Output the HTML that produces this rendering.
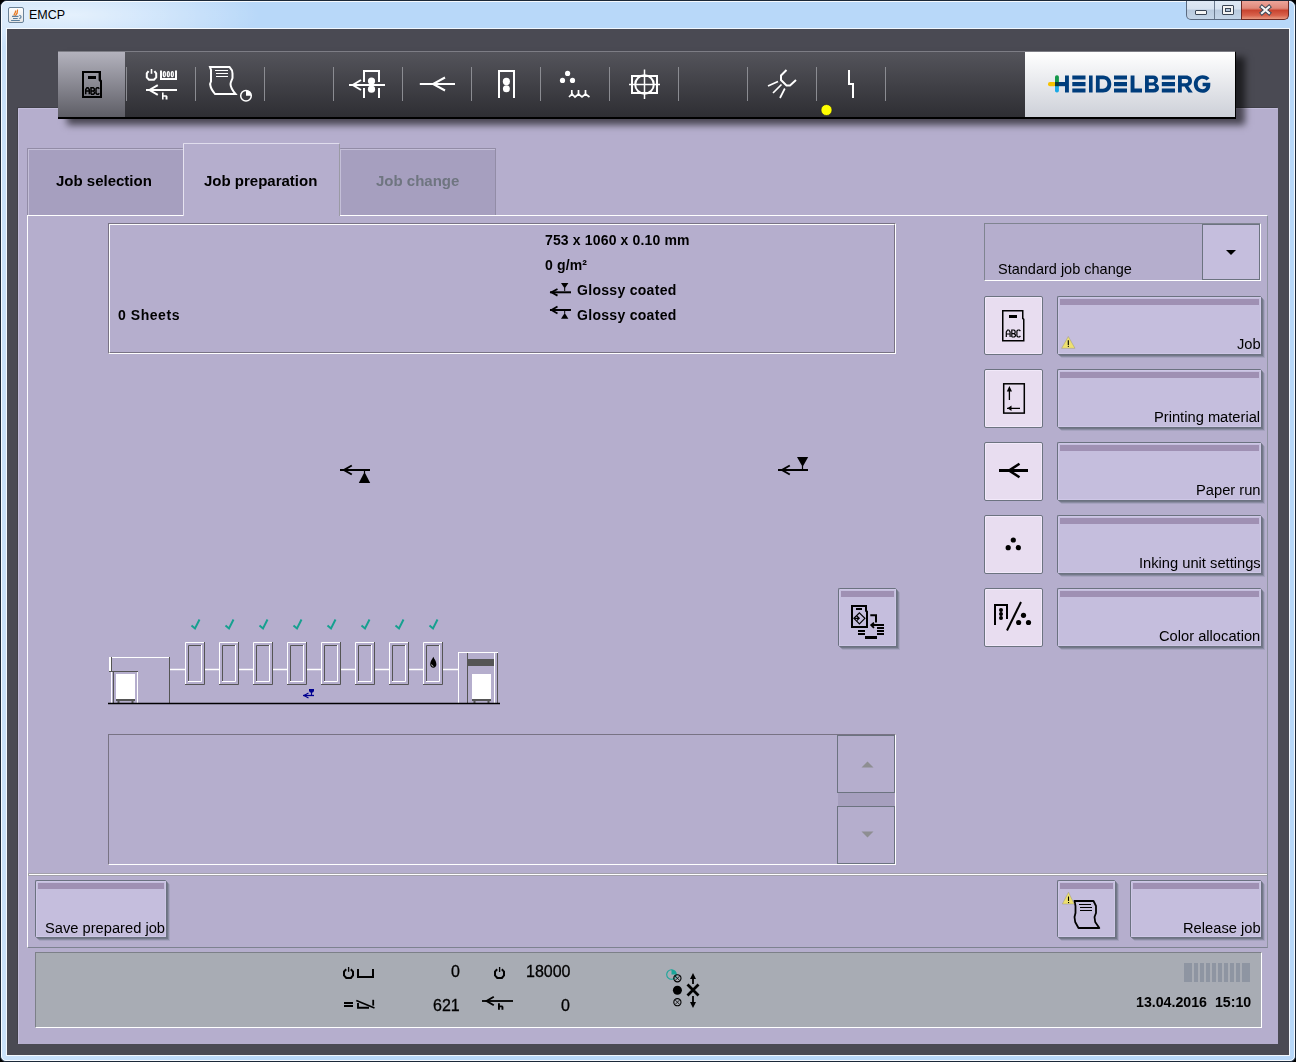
<!DOCTYPE html>
<html><head><meta charset="utf-8">
<style>
*{margin:0;padding:0;box-sizing:border-box}
html,body{width:1296px;height:1062px;overflow:hidden;background:#000;font-family:"Liberation Sans",sans-serif}
.a{position:absolute}
.info,.txt,.num,.lbl,.btxt{will-change:transform}
#frame{left:0;top:0;width:1296px;height:1062px;border-radius:7px 7px 6px 6px;background:radial-gradient(ellipse 190px 34px at 70px 14px,rgba(255,255,255,.55),rgba(255,255,255,0)),linear-gradient(90deg,rgba(255,255,255,.25),rgba(255,255,255,0) 260px),#b8d8f9;border:1px solid #1b2838}
#client{left:7px;top:29px;width:1282px;height:1026px;background:#4a4a53}
#lav{left:18px;top:108px;width:1260px;height:936px;background:#b5aecd;border-radius:1px 1px 0 0;box-shadow:inset 1px 1px 0 #c3bddb,-1px -1px 0 #404048}
#tb{left:58px;top:51px;width:1178px;height:68px;background:linear-gradient(#54545b,#2e2e33);border-top:1px solid #7d7d85;border-bottom:2px solid #000;border-right:1px solid #000;box-shadow:9px 6px 7px rgba(0,0,0,.6)}
.sep{width:1px;height:34px;top:16px;background:#8a8a90}
#logo{left:1025px;top:52px;width:210px;height:65px;background:linear-gradient(#ffffff,#cdd0d8)}
.tabi{background:#a69fbf;border-top:1px solid #928ca6;border-left:1px solid #928ca6;border-right:1px solid #928ca6;border-radius:1px 1px 0 0;box-shadow:inset 1px 1px 0 #c4bfd8}
.info{font-weight:bold;font-size:14px;color:#000;white-space:nowrap}
.txt{font-size:14.5px;color:#000;white-space:nowrap}
.num{font-size:16px;color:#000;white-space:nowrap;-webkit-text-stroke:.3px #000}
.lbl{font-weight:bold;font-size:15px;color:#000;white-space:nowrap}
.etch{border-top:1px solid #7a7488;border-left:1px solid #7a7488;box-shadow:inset 1px 1px 0 #fff, 1px 1px 0 #fff;}
.ib{width:59px;height:59px;background:#e8ddf0;border:1px solid #6c7380;border-radius:2px;box-shadow:inset 1px 1px 0 #f2e9fa,inset -1px -1px 0 #f2e9fa}
.bt{background:#c5bedd;border-left:1px solid #6b7280;border-top:1px solid #6b7280;border-radius:2px 1px 0 1px;box-shadow:inset 1px 1px 0 #cec7e6,inset -1px -1px 0 #cec7e6,1px 1px 0 #6b7280,2px 2px 0 rgba(107,114,128,.75),3px 3px 0 rgba(107,114,128,.45),4px 4px 0 rgba(107,114,128,.2)}
.stripe{left:2px;right:2px;top:2px;height:6px;background:#9f90b3}
.btxt{font-size:14.7px;color:#000;white-space:nowrap;right:.5px;bottom:2px}
</style></head><body>
<div id="frame" class="a"></div>
<div id="client" class="a"></div>
<div class="a" style="left:1px;top:1px;width:1294px;height:1060px;border:1px solid rgba(255,255,255,.85);border-radius:6px 6px 5px 5px"></div>
<div class="a" style="left:6px;top:28px;width:1284px;height:1028px;border:1px solid rgba(255,255,255,.8)"></div>
<!-- title icon -->
<div class="a" style="left:8px;top:7px;width:16px;height:16px;border:1px solid #6a8298;border-radius:2px;background:linear-gradient(#fdfdfd,#e6e6e6)"></div>
<svg class="a" style="left:0;top:0" width="30" height="30">
<path d="M14.3 15.6C13.2 13.5 16.8 12.6 15.3 10.6M17.8 9.6C16.4 11 18.5 12.3 16.2 14.4C15.2 15.3 16 15.8 16.2 15.8" stroke="#e87820" stroke-width="1.3" fill="none"/>
<path d="M12 16.4H18.5M13 18.5H17.7M11.1 20.5H19.8" stroke="#5b7f9e" stroke-width="1.1"/>
<path d="M19.3 15.2C21.6 15.6 21.8 17.9 19.3 18.8" stroke="#5b7f9e" stroke-width="1.1" fill="none"/>
</svg>
<div class="a" style="left:29px;top:8px;font-size:12.5px;color:#000">EMCP</div>
<!-- window buttons -->
<div class="a" style="left:1186px;top:1px;width:56px;height:19px;border:1px solid #5b6a80;border-top:none;border-radius:0 0 0 5px;background:linear-gradient(#dfe9f5 0,#d6e2f0 45%,#b9cade 50%,#c4d5e8 100%)"></div>
<div class="a" style="left:1214px;top:1px;width:1px;height:18px;background:#6a7a8e"></div>
<div class="a" style="left:1195px;top:10px;width:12px;height:5px;background:#f4f4f4;border:1px solid #3a4555;border-radius:1px"></div>
<div class="a" style="left:1222px;top:5px;width:12px;height:10px;background:#f4f4f4;border:1px solid #3a4555;border-radius:1px"></div>
<div class="a" style="left:1225px;top:8px;width:6px;height:4px;background:#b4c6da;border:1px solid #3a4555"></div>
<div class="a" style="left:1241px;top:1px;width:48px;height:19px;border:1px solid #6b2a24;border-top:none;border-radius:0 0 5px 0;background:linear-gradient(#eda59a 0,#e0887a 40%,#c84430 52%,#d8624c 80%,#e89a82 100%)"></div>
<svg class="a" style="left:1258px;top:4px" width="16" height="12" viewBox="0 0 16 12"><path d="M4 3l7 6M11 3L4 9" stroke="#404a58" stroke-width="4.2" stroke-linecap="square"/><path d="M4 3l7 6M11 3L4 9" stroke="#f6f6f6" stroke-width="2.2" stroke-linecap="square"/></svg>

<div id="lav" class="a"></div>
<div id="tb" class="a">
  <div class="a" style="left:0;top:0;width:67px;height:65px;background:linear-gradient(#b3b2bd,#5e5e66)"></div>
</div>
<div id="logo" class="a"></div><div class="a" style="left:126px;top:67px;width:1px;height:34px;background:#8b8c92"></div><div class="a" style="left:195px;top:67px;width:1px;height:34px;background:#8b8c92"></div><div class="a" style="left:264px;top:67px;width:1px;height:34px;background:#8b8c92"></div><div class="a" style="left:333px;top:67px;width:1px;height:34px;background:#8b8c92"></div><div class="a" style="left:402px;top:67px;width:1px;height:34px;background:#8b8c92"></div><div class="a" style="left:471px;top:67px;width:1px;height:34px;background:#8b8c92"></div><div class="a" style="left:540px;top:67px;width:1px;height:34px;background:#8b8c92"></div><div class="a" style="left:609px;top:67px;width:1px;height:34px;background:#8b8c92"></div><div class="a" style="left:678px;top:67px;width:1px;height:34px;background:#8b8c92"></div><div class="a" style="left:747px;top:67px;width:1px;height:34px;background:#8b8c92"></div><div class="a" style="left:816px;top:67px;width:1px;height:34px;background:#8b8c92"></div><div class="a" style="left:885px;top:67px;width:1px;height:34px;background:#8b8c92"></div>
<svg class="a" style="left:0;top:0" width="1296" height="130">
<g fill="#000" fill-rule="evenodd">
<path d="M82 71H101V79.5L102 80.5V98H82Z M84 73V96H100V82L98.6 80.6V73Z"/>
<rect x="88" y="76" width="8" height="3"/>
</g>
<g stroke="#000" stroke-width="1.5" fill="none">
<path d="M85.7 94.3V89.5L87 87.7H88L89.3 89.5V94.3M85.7 91H89.3"/>
<path d="M91 94.3V87.7H93.3L94.3 88.7V90.3L93.3 91H91M93.3 91L94.5 92V93.3L93.5 94.3H91"/>
<path d="M99.3 88.7L98.3 87.7H97L96 88.7V93.3L97 94.3H98.3L99.3 93.3"/>
</g>
<g stroke="#fff" stroke-width="2" fill="none">
<path d="M148.6 71.2L146.8 73.4V77.4L149 79.8H154L156.2 77.4V73.4L154.4 71.2"/>
<path d="M151.5 69V73.8" stroke-width="1.6"/>
<path d="M161 70.5V79H176V70.5"/>
<path d="M146 90H177"/>
<path d="M157.8 85.2L149.5 90L157.8 94.8"/>
</g>
<g stroke="#fff" stroke-width="1.3" fill="none">
<ellipse cx="164.3" cy="74.2" rx="1" ry="2.5"/><ellipse cx="168.3" cy="74.2" rx="1" ry="2.5"/><ellipse cx="172.3" cy="74.2" rx="1" ry="2.5"/>
</g>
<path d="M162 92.5H163.6V95.3H166.5L167.5 96.3V99.5H165.6V96.8H163.6V99.5H162Z" fill="#fff"/>
<g stroke="#fff" stroke-width="2" fill="none">
<path d="M210 67H229.5C231 68.5 232.5 71 232.5 73.5V78C232 80 230.5 82 230.5 84C230.5 88 233 91 235.5 94H215C213 91.5 211 89 210.5 86C210 84.5 210 83 211 81.5V70Z"/>
</g>
<g stroke="#fff" stroke-width="1" fill="none"><path d="M215 70.5H228M216 73.5H228M216 76.5H228"/></g>
<circle cx="246" cy="95.8" r="5.3" stroke="#fff" stroke-width="1.5" fill="none"/>
<path d="M246 95.8V90.5A5.3 5.3 0 0 1 251.3 95.8Z" fill="#fff"/>
<g stroke="#fff" stroke-width="2" fill="none">
<path d="M349 85H385"/>
<path d="M361 80L352.8 85L361 90"/>
<path d="M364 82V71H379V82M364 88V98M379 88V98"/>
<path d="M419.8 84H455"/>
<path d="M445 77.5L433 84L445 90.5"/>
<path d="M499 98V71H514V98"/>
<rect x="632" y="76" width="25" height="17"/>
<circle cx="644.5" cy="84.5" r="9.3"/>
<path d="M786.5 70L781 75.5V80L786.5 85.5H790L796 80"/>
<path d="M849 70V84H853V98"/>
<path d="M569 97L572 94L575 97L578.5 94L582 97L585.5 94L589.5 97" stroke-width="1.7"/>
</g>
<g stroke="#fff" stroke-width="1.7" fill="none">
<path d="M571.8 90V94M578.5 90V94M585.5 90V94"/>
<path d="M778 81.5L768 86M781.5 84.5L773 93M784.8 88.5L780 98"/>
</g>
<g stroke="#fff" stroke-width="1.5" fill="none">
<path d="M644.5 69.5V99M629 84.5H660"/>
</g>
<g fill="#fff">
<circle cx="371.5" cy="81" r="3.6"/><circle cx="371.5" cy="89.2" r="3.6"/>
<circle cx="506.4" cy="81.4" r="3.6"/><circle cx="506.4" cy="88.8" r="3.5"/>
<circle cx="567.6" cy="73.4" r="2.6"/><circle cx="562.5" cy="80.4" r="2.6"/><circle cx="572.5" cy="80.4" r="2.6"/>
</g>
<circle cx="826.5" cy="110" r="5.5" fill="#ffff00" stroke="#1c1c2c" stroke-width=".6"/>
<!-- logo -->
<g fill="#003d7c">
<rect x="1055" y="82" width="12" height="4.2"/>
<rect x="1065" y="75.5" width="3.9" height="17"/>
<rect x="1072.3" y="75.5" width="13.2" height="4"/><rect x="1072.3" y="82" width="13.2" height="4.2"/><rect x="1072.3" y="88.5" width="13.2" height="4"/>
<rect x="1089" y="75.5" width="3.6" height="17"/>
<path d="M1095.9 75.5H1103C1108 75.5 1111.3 79 1111.3 84C1111.3 89 1108 92.5 1103 92.5H1095.9Z M1099.7 79.3V88.7H1103C1105.8 88.7 1107.4 86.7 1107.4 84C1107.4 81.3 1105.8 79.3 1103 79.3Z" fill-rule="evenodd"/>
<rect x="1114" y="75.5" width="13" height="4"/><rect x="1114" y="82" width="13" height="4.2"/><rect x="1114" y="88.5" width="13" height="4"/>
<path d="M1130.6 75.5H1134.5V88.5H1142V92.5H1130.6Z"/>
<path d="M1145 75.5H1153C1156.3 75.5 1158 77.3 1158 79.8C1158 81.8 1157 83 1155.6 83.6C1157.6 84.3 1159 85.8 1159 88C1159 90.8 1157 92.5 1153.5 92.5H1145Z M1148.8 79V82.4H1152.5C1153.8 82.4 1154.3 81.7 1154.3 80.7C1154.3 79.7 1153.8 79 1152.5 79Z M1148.8 85.6V89H1153C1154.5 89 1155.2 88.3 1155.2 87.3C1155.2 86.3 1154.5 85.6 1153 85.6Z" fill-rule="evenodd"/>
<rect x="1161.8" y="75.5" width="13.2" height="4"/><rect x="1161.8" y="82" width="13.2" height="4.2"/><rect x="1161.8" y="88.5" width="13.2" height="4"/>
<path d="M1178 75.5H1186C1189.8 75.5 1192 77.8 1192 81C1192 83.6 1190.6 85.4 1188.3 86.1L1192.8 92.5H1188.4L1184.5 86.6H1181.8V92.5H1178Z M1181.8 79V83.2H1185.8C1187.4 83.2 1188.2 82.3 1188.2 81.1C1188.2 79.9 1187.4 79 1185.8 79Z" fill-rule="evenodd"/>
<path d="M1209.5 78.2C1208 76.3 1205.5 75.2 1202.5 75.2C1197.3 75.2 1193.8 79.2 1193.8 84C1193.8 88.9 1197.4 92.8 1202.5 92.8C1207.3 92.8 1210.3 89.6 1210.3 85V82.8H1202.6V86.2H1206.3C1205.8 88.2 1204.4 89.2 1202.5 89.2C1199.6 89.2 1197.7 86.9 1197.7 84C1197.7 81.1 1199.6 78.8 1202.5 78.8C1204.2 78.8 1205.6 79.5 1206.5 80.6Z"/>
</g>
<rect x="1048" y="82" width="8" height="4.2" rx="2" fill="#f7c200"/>
<rect x="1055" y="75.3" width="3.9" height="9" rx="1.8" fill="#15984a"/>
<rect x="1055" y="84" width="3.9" height="8.6" rx="1.8" fill="#1aa9e6"/>
<rect x="1055" y="82" width="3.9" height="4.2" fill="#0a3a3a"/>
</svg>


<!-- tabs -->
<div class="a" style="left:27px;top:215px;width:1241px;height:733px;border-top:1px solid #fff;border-left:1px solid #fff;border-right:1px solid #8d93a0;border-bottom:1px solid #7d8290"></div>
<div class="a tabi" style="left:27px;top:148px;width:156px;height:67px;border-right:none"></div>
<div class="a" style="left:183px;top:143px;width:157px;height:73px;background:#b5aecd;border-top:1px solid #e0dded;border-left:1px solid #e6e3f0;border-right:1px solid #9a9aa4;border-radius:1px 1px 0 0"></div>
<div class="a tabi" style="left:340px;top:148px;width:156px;height:67px;border-left:none;box-shadow:inset 1px 1px 0 #c4bfd8"></div>
<div class="a lbl" style="left:56px;top:172px">Job selection</div>
<div class="a lbl" style="left:204px;top:172px">Job preparation</div>
<div class="a lbl" style="left:376px;top:172px;color:#6f7580">Job change</div>

<!-- info panel -->
<div class="a" style="left:108px;top:223px;width:788px;height:131px;border-top:1px solid #787384;border-left:1px solid #787384;border-right:1px solid #fff;border-bottom:1px solid #fff"></div>
<div class="a" style="left:109px;top:224px;width:786px;height:129px;border-top:1px solid #fff;border-left:1px solid #fff;border-right:1px solid #787384;border-bottom:1px solid #787384"></div>
<div class="a info" style="left:545px;top:232px;letter-spacing:.15px">753 x 1060 x 0.10 mm</div>
<div class="a info" style="left:545px;top:256.5px;letter-spacing:.15px">0 g/m²</div>
<div class="a info" style="left:576.5px;top:282px;letter-spacing:.3px">Glossy coated</div>
<div class="a info" style="left:576.5px;top:307px;letter-spacing:.3px">Glossy coated</div>
<div class="a info" style="left:117.5px;top:307px;letter-spacing:.55px">0 Sheets</div>
<!-- combo -->
<div class="a" style="left:984px;top:223px;width:277px;height:58px;border-top:1px solid #7f8490;border-left:1px solid #7f8490;border-right:1px solid #fff;border-bottom:1px solid #fff"></div>
<div class="a" style="left:1202px;top:224px;width:58px;height:56px;background:#c5bedd;border:1px solid #6c7380"></div>
<svg class="a" style="left:1225px;top:249px" width="12" height="7"><path d="M1 1h10L6 6z" fill="#000"/></svg>
<div class="a txt" style="left:998px;top:261px">Standard job change</div>
<!-- right buttons -->
<div class="a ib" style="left:984px;top:296px"></div>
<div class="a ib" style="left:984px;top:369px"></div>
<div class="a ib" style="left:984px;top:442px"></div>
<div class="a ib" style="left:984px;top:515px"></div>
<div class="a ib" style="left:984px;top:588px"></div>
<div class="a bt" style="left:1057px;top:296px;width:204px;height:58px"><div class="a stripe"></div><div class="a btxt">Job</div></div>
<div class="a bt" style="left:1057px;top:369px;width:204px;height:58px"><div class="a stripe"></div><div class="a btxt">Printing material</div></div>
<div class="a bt" style="left:1057px;top:442px;width:204px;height:58px"><div class="a stripe"></div><div class="a btxt">Paper run</div></div>
<div class="a bt" style="left:1057px;top:515px;width:204px;height:58px"><div class="a stripe"></div><div class="a btxt">Inking unit settings</div></div>
<div class="a bt" style="left:1057px;top:588px;width:204px;height:58px"><div class="a stripe"></div><div class="a btxt">Color allocation</div></div>
<div class="a bt" style="left:838px;top:588px;width:58px;height:58px"><div class="a stripe"></div></div>

<svg class="a" style="left:0;top:0" width="1296" height="720">
<g fill="none" stroke-width="1">
<path d="M170 669.5H185M205 669.5H219M239 669.5H253M273 669.5H287M307 669.5H321M341 669.5H355M375 669.5H389M409 669.5H423M443 669.5H458" stroke="#fff" stroke-width="1.3"/>
<path d="M185.5 684.5V642.5H204.5" stroke="#fff"/><path d="M204.5 642V684.5H185" stroke="#555"/><path d="M188.5 681V645.5H201.5" stroke="#555"/><path d="M201.5 645V681.5H188" stroke="#fff"/><path d="M191.5 625.5L195 628.5L199.5 619.5" stroke="#17a090" stroke-width="2"/><path d="M219.5 684.5V642.5H238.5" stroke="#fff"/><path d="M238.5 642V684.5H219" stroke="#555"/><path d="M222.5 681V645.5H235.5" stroke="#555"/><path d="M235.5 645V681.5H222" stroke="#fff"/><path d="M225.5 625.5L229 628.5L233.5 619.5" stroke="#17a090" stroke-width="2"/><path d="M253.5 684.5V642.5H272.5" stroke="#fff"/><path d="M272.5 642V684.5H253" stroke="#555"/><path d="M256.5 681V645.5H269.5" stroke="#555"/><path d="M269.5 645V681.5H256" stroke="#fff"/><path d="M259.5 625.5L263 628.5L267.5 619.5" stroke="#17a090" stroke-width="2"/><path d="M287.5 684.5V642.5H306.5" stroke="#fff"/><path d="M306.5 642V684.5H287" stroke="#555"/><path d="M290.5 681V645.5H303.5" stroke="#555"/><path d="M303.5 645V681.5H290" stroke="#fff"/><path d="M293.5 625.5L297 628.5L301.5 619.5" stroke="#17a090" stroke-width="2"/><path d="M321.5 684.5V642.5H340.5" stroke="#fff"/><path d="M340.5 642V684.5H321" stroke="#555"/><path d="M324.5 681V645.5H337.5" stroke="#555"/><path d="M337.5 645V681.5H324" stroke="#fff"/><path d="M327.5 625.5L331 628.5L335.5 619.5" stroke="#17a090" stroke-width="2"/><path d="M355.5 684.5V642.5H374.5" stroke="#fff"/><path d="M374.5 642V684.5H355" stroke="#555"/><path d="M358.5 681V645.5H371.5" stroke="#555"/><path d="M371.5 645V681.5H358" stroke="#fff"/><path d="M361.5 625.5L365 628.5L369.5 619.5" stroke="#17a090" stroke-width="2"/><path d="M389.5 684.5V642.5H408.5" stroke="#fff"/><path d="M408.5 642V684.5H389" stroke="#555"/><path d="M392.5 681V645.5H405.5" stroke="#555"/><path d="M405.5 645V681.5H392" stroke="#fff"/><path d="M395.5 625.5L399 628.5L403.5 619.5" stroke="#17a090" stroke-width="2"/><path d="M423.5 684.5V642.5H442.5" stroke="#fff"/><path d="M442.5 642V684.5H423" stroke="#555"/><path d="M426.5 681V645.5H439.5" stroke="#555"/><path d="M439.5 645V681.5H426" stroke="#fff"/><path d="M429.5 625.5L433 628.5L437.5 619.5" stroke="#17a090" stroke-width="2"/>
<!-- feeder -->
<path d="M109 657.5H169" stroke="#fff"/>
<rect x="109" y="657" width="2" height="14" fill="#fff" stroke="none"/>
<path d="M111.5 657V671.5M109 671.5H138" stroke="#555"/>
<path d="M111.5 672V703M137.5 672V703" stroke="#fff"/>
<path d="M113.5 672V703M169.5 657V703" stroke="#555"/>
<rect x="116" y="674" width="19" height="25" fill="#fff" stroke="none"/>
<path d="M116 700H135" stroke="#555" stroke-width="2"/>
<path d="M118.5 701V703M132.5 701V703" stroke="#555" stroke-width="2"/>
<!-- delivery -->
<path d="M458 652.5H498M458.5 652V703M494.5 653V703" stroke="#fff"/>
<path d="M467.5 653V703M497.5 653V703" stroke="#555"/>
<rect x="468" y="659" width="26" height="7" fill="#555" stroke="none"/>
<rect x="472" y="674" width="19" height="25" fill="#fff" stroke="none"/>
<path d="M472 700H491" stroke="#555" stroke-width="2"/>
<path d="M474.5 701V703M488.5 701V703" stroke="#555" stroke-width="2"/>
<path d="M108 703.5H500" stroke="#000" stroke-width="1.6"/>
</g>
<!-- ink drop -->
<path d="M433.3 656.8C432.5 659 430.2 661 430.2 664.3C430.2 666.3 431.6 667.7 433.3 667.7C435 667.7 436.4 666.3 436.4 664.3C436.4 661 434.1 659 433.3 656.8Z" fill="#000"/>
<path d="M431.6 664.5C431.8 665.6 432.4 666.2 433.4 666.4" stroke="#fff" stroke-width=".8" fill="none"/>
<!-- blue icon -->
<g stroke="#000090" fill="#000090">
<path d="M303 695.5H314" stroke-width="1.3"/>
<path d="M304 695.5L308.5 693M304 695.5L308.5 698" stroke-width="1.2"/>
<path d="M309 689H314V691L313 692.5H310L309 691Z" stroke="none"/>
<path d="M311.5 692V695" stroke-width="1.2"/>
</g>
<!-- middle arrows -->
<g fill="#000" stroke="#000">
<path d="M340 470H370" stroke-width="2" fill="none"/>
<path d="M351.8 465.5L344 470L351.8 474.5" stroke-width="2" fill="none"/>
<path d="M364.5 472L370.2 483H358.8Z" stroke="none"/><path d="M364.5 470V473" stroke-width="1.2"/>
<path d="M778 470H808" stroke-width="2" fill="none"/>
<path d="M789.8 465.5L782 470L789.8 474.5" stroke-width="2" fill="none"/>
<path d="M797 457H808.2L802.6 467Z" stroke="none"/><path d="M802.5 466V469.5" stroke-width="1.2"/>
</g>
<!-- info panel small icons -->
<g fill="#000" stroke="#000">
<path d="M550 292.3H571" stroke-width="2" fill="none"/>
<path d="M557.5 289L551.5 292.3L557.5 295.6" stroke-width="1.8" fill="none"/>
<path d="M561 283H568.4L564.7 288.5Z" stroke="none"/><path d="M564.7 288V291" stroke-width="1"/>
<path d="M550 310H571" stroke-width="2" fill="none"/>
<path d="M557.5 306.5L551.5 310L557.5 313.5" stroke-width="1.8" fill="none"/>
<path d="M564.7 313L568.4 318.7H561Z" stroke="none"/><path d="M564.7 310.5V313.5" stroke-width="1"/>
</g>
</svg>
<!-- message box -->
<div class="a" style="left:108px;top:734px;width:788px;height:131px;border-top:1px solid #787384;border-left:1px solid #787384;border-right:1px solid #fff;border-bottom:1px solid #fff"></div>
<div class="a" style="left:837px;top:735px;width:58px;height:58px;border:1px solid #6c7380"></div>
<div class="a" style="left:838px;top:793px;width:57px;height:13px;background:#a69fbe"></div>
<div class="a" style="left:837px;top:806px;width:58px;height:58px;border:1px solid #6c7380"></div>
<svg class="a" style="left:861px;top:760px" width="13" height="8"><path d="M0.5 7.5h12L6.5 1.5z" fill="#8e8e92"/></svg>
<svg class="a" style="left:861px;top:831px" width="13" height="8"><path d="M0.5 0.5h12L6.5 6.5z" fill="#8e8e92"/></svg>
<!-- separator -->
<div class="a" style="left:28px;top:873px;width:1239px;height:3px;background:#a3a1ab;"></div>
<div class="a" style="left:29px;top:874px;width:1238px;height:1px;background:#fff"></div>
<!-- bottom buttons -->
<div class="a bt" style="left:35px;top:880px;width:131px;height:57px"><div class="a stripe"></div><div class="a btxt" style="bottom:1px">Save prepared job</div></div>
<div class="a bt" style="left:1057px;top:880px;width:58px;height:57px"><div class="a stripe"></div></div>
<div class="a bt" style="left:1130px;top:880px;width:131px;height:57px"><div class="a stripe"></div><div class="a btxt" style="bottom:1px">Release job</div></div>
<!-- status bar -->
<div class="a" style="left:35px;top:952px;width:1227px;height:76px;background:#a8acb4;border-top:1px solid #7c8088;border-left:1px solid #7c8088;border-right:1px solid #fff;border-bottom:1px solid #fff"></div>

<svg class="a" style="left:0;top:0" width="1296" height="1062">
<!-- right panel ABC -->
<g fill="#000" fill-rule="evenodd">
<path d="M1002 310H1023.5V318L1024.5 319V341.5H1002Z M1003.5 311.5V340H1023V319.7L1022 318.7V311.5Z"/>
<rect x="1009" y="315" width="8" height="3"/>
</g>
<g stroke="#000" stroke-width="1.2" fill="none">
<path d="M1006.3 337V332L1007.6 330H1008.8L1010.1 332V337M1006.3 334H1010.1"/>
<path d="M1011.8 337V330H1014.1L1015.1 331V333L1014.1 333.7H1011.8M1014.1 333.7L1015.4 334.7V336L1014.4 337H1011.8"/>
<path d="M1020.4 331L1019.4 330H1017.9L1016.9 331V336L1017.9 337H1019.4L1020.4 336"/>
</g>
<!-- printing material -->
<rect x="1003.7" y="383.8" width="20.6" height="29.3" stroke="#000" stroke-width="1.5" fill="none"/>
<path d="M1009.4 390V400M1007 408.3H1020" stroke="#000" stroke-width="1.3"/>
<path d="M1009.4 386L1012 391.5H1006.8Z M1007.5 408.3L1011.5 405.5V411Z" fill="#000"/>
<!-- paper run -->
<path d="M999 470.5H1028" stroke="#000" stroke-width="3"/>
<path d="M1019.5 463.8L1009 470.5L1019.5 477.2" stroke="#000" stroke-width="2.5" fill="none"/>
<!-- inking dots -->
<g fill="#000"><circle cx="1013.3" cy="540" r="2.6"/><circle cx="1008.2" cy="547.7" r="2.6"/><circle cx="1018.3" cy="547.7" r="2.6"/></g>
<!-- color allocation -->
<path d="M995 625V605H1007V619" stroke="#000" stroke-width="2" fill="none"/>
<path d="M1001 609V619" stroke="#000" stroke-width="1.2"/>
<g fill="#000"><circle cx="1001" cy="610" r="2"/><circle cx="1001" cy="614" r="2"/><circle cx="1001" cy="618" r="2"/></g>
<path d="M1007 630.5L1021 602" stroke="#000" stroke-width="2"/>
<g fill="#000"><circle cx="1023.5" cy="615.3" r="2.6"/><circle cx="1018.6" cy="622.5" r="2.6"/><circle cx="1028.5" cy="622.5" r="2.6"/></g>
<!-- job transfer icon -->
<g fill="#000" fill-rule="evenodd">
<path d="M851 605H867V610.3L868 611.3V628H851Z M853 607V626H866V612.3L865 611.3V607Z"/>
<rect x="856" y="608" width="6" height="2"/>
</g>
<path d="M859.4 612.8L864.9 618.3L859.4 623.8L853.9 618.3Z" stroke="#000" stroke-width="1.2" fill="none"/>
<path d="M854.3 618.3H859.5M856.8 616L859.2 618.3L856.8 620.6" stroke="#000" stroke-width="1.2" fill="none"/>
<path d="M870.3 615.3H876V622.6" stroke="#000" stroke-width="2" fill="none"/>
<path d="M871.3 625H884" stroke="#000" stroke-width="2"/>
<path d="M874 622.6L871.2 625L874 627.8" stroke="#000" stroke-width="1.8" fill="none"/>
<g fill="#000">
<rect x="877" y="627" width="7" height="2"/><rect x="877" y="630" width="7" height="2"/><rect x="877" y="633" width="7" height="2"/>
<rect x="858" y="630" width="7" height="2"/><rect x="858" y="633" width="7" height="2"/>
<rect x="865" y="636" width="12" height="3"/>
</g>
<!-- warning job -->
<path d="M1068.3 336.5L1075 348.3H1061.6Z" fill="#eee070" stroke="#8a8a70" stroke-width=".4"/>
<path d="M1068.3 340.2V345" stroke="#000" stroke-width="1.1"/><rect x="1067.8" y="345.8" width="1.1" height="1.1" fill="#000"/>
<!-- warning + scroll -->
<path d="M1074.5 901H1093.5L1096 906V913L1094.5 917L1095.2 922L1099.3 928H1078.5L1075.2 922L1074.5 917L1075.5 913V906Z" stroke="#000" stroke-width="1.8" fill="none" stroke-linejoin="round"/>
<path d="M1079 904.5H1091M1080 907.5H1092M1080 910.5H1092" stroke="#000" stroke-width="1"/>
<path d="M1068.5 892.3L1074.2 904H1062.3Z" fill="#eee070" stroke="#8a8a70" stroke-width=".4"/>
<path d="M1068.5 896.5V901" stroke="#000" stroke-width="1.1"/><rect x="1068" y="902" width="1.1" height="1.1" fill="#000"/>
<!-- status bar icons -->
<g stroke="#000" fill="none">
<path d="M346.2 969.3L344 971.6V975.4L346.3 978H350.9L353 975.4V971.6L350.8 969.3" stroke-width="2"/>
<path d="M348.6 967V971.8" stroke-width="1.3"/>
<path d="M358 969V977H373V969" stroke-width="2"/>
<path d="M497.2 969.3L495 971.6V975.4L497.3 978H501.9L504 975.4V971.6L501.8 969.3" stroke-width="2"/>
<path d="M499.6 967V972" stroke-width="1.3"/>
<path d="M344 1003H353M344 1006H353" stroke-width="1.8"/>
<path d="M358 1003V1007.8H369" stroke-width="1.9"/>
<path d="M356.3 1000.5L374.5 1008" stroke-width="1.7"/>
<path d="M373.2 999.8V1005.6" stroke-width="1.8"/>
<path d="M482 1001H513" stroke-width="1.8"/>
<path d="M493.8 996.7L486.5 1001L493.8 1005.3" stroke-width="1.9"/>
</g>
<path d="M498 1003.3H499.9V1005.6H502.3L503.4 1006.7V1009.8H501.5V1007.3H499.9V1009.8H498Z" fill="#000"/>
<!-- status cluster -->
<circle cx="671.5" cy="974.5" r="4.8" stroke="#1aa69a" stroke-width="1.1" fill="none"/>
<path d="M671.5 974.5V969.7A4.8 4.8 0 0 1 676.3 974.5Z" fill="#1aa69a"/>
<g stroke="#000" stroke-width="1.1" fill="none">
<circle cx="677.4" cy="978.3" r="3.6"/><path d="M675 976L679.8 980.6M679.8 976L675 980.6" stroke-width=".8"/>
<circle cx="677.4" cy="1002.2" r="3.6"/><path d="M675 999.8L679.8 1004.6M679.8 999.8L675 1004.6" stroke-width=".8"/>
</g>
<circle cx="677.4" cy="990.2" r="4.5" fill="#000"/>
<g stroke="#000" fill="none">
<path d="M687.5 984.5L698.5 995.5M698.5 984.5L687.5 995.5" stroke-width="2.8"/>
<path d="M693 975V984M693 996V1006" stroke-width="1.8"/>
</g>
<path d="M693 973L696 979H690Z M693 1008L696 1002H690Z" fill="#000"/>
<g fill="#8e95a2">
<rect x="1184" y="963" width="8" height="19"/>
<rect x="1194" y="963" width="4" height="19"/><rect x="1200" y="963" width="4" height="19"/><rect x="1206" y="963" width="4" height="19"/><rect x="1212" y="963" width="4" height="19"/>
<rect x="1218" y="963" width="4" height="19"/><rect x="1224" y="963" width="4" height="19"/><rect x="1230" y="963" width="4" height="19"/><rect x="1236" y="963" width="4" height="19"/>
<rect x="1242" y="963" width="8" height="19"/>
</g>
</svg>
<div class="a num" style="right:836px;top:963px">0</div>
<div class="a num" style="right:726px;top:963px">18000</div>
<div class="a num" style="right:836px;top:997px">621</div>
<div class="a num" style="right:726px;top:997px">0</div>
<div class="a info" style="left:1135.5px;top:994px;font-size:14.2px">13.04.2016&nbsp;&nbsp;15:10</div>
</body></html>
